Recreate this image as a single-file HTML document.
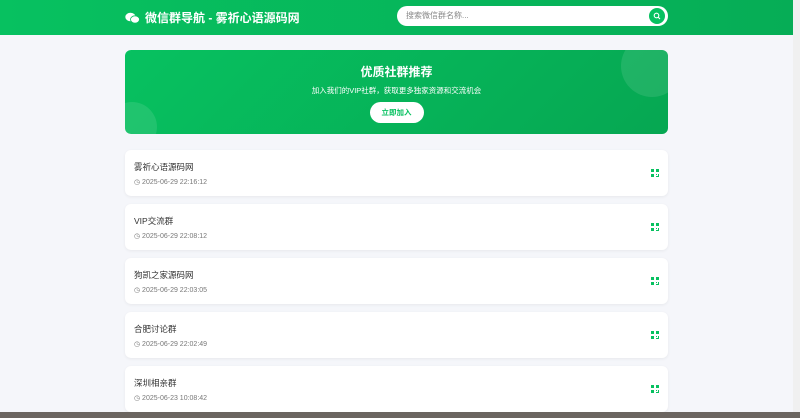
<!DOCTYPE html>
<html><head><meta charset="utf-8"><style>
*{margin:0;padding:0;box-sizing:border-box}
body{width:800px;height:418px;overflow:hidden;background:#f5f6fa;font-family:"Liberation Sans","Noto Sans CJK SC",sans-serif;position:relative}
.hd{position:absolute;left:0;top:0;width:793px;height:35px;background:linear-gradient(90deg,#07c160,#06ad56)}
.logo{position:absolute;left:125px;top:9px;color:#fff;font-size:12px;font-weight:bold;display:flex;align-items:center;gap:5px}
.search{position:absolute;left:397px;top:6px;width:271px;height:20px;background:#fff;border-radius:10px;font-size:8px;color:#888;padding-left:9px;line-height:20px}
.sbtn{position:absolute;right:3px;top:2px;width:16px;height:16px;border-radius:50%;background:#07c160}
.ban{position:absolute;left:125px;top:50px;width:543px;height:84px;border-radius:6px;background:linear-gradient(135deg,#07c160,#06a752);overflow:hidden;text-align:center;color:#fff}
.ban h2{font-size:12px;margin-top:13px}
.ban p{font-size:7.5px;margin-top:5px}
.btn{display:inline-block;margin-top:6px;background:#fff;color:#07c160;font-size:7.5px;font-weight:bold;width:54px;height:21px;line-height:21px;border-radius:11px}
.c1{position:absolute;right:-15px;top:-15px;width:62px;height:62px;border-radius:50%;background:rgba(255,255,255,.1)}
.c2{position:absolute;left:-18px;top:52px;width:50px;height:50px;border-radius:50%;background:rgba(255,255,255,.1)}
.card{position:absolute;left:125px;width:543px;height:46px;background:#fff;border-radius:6px;box-shadow:0 1px 3px rgba(0,0,0,.06)}
.t{position:absolute;left:9px;top:11px;font-size:8.5px;color:#333}
.d{position:absolute;left:9px;top:28px;font-size:7px;color:#777}
.q{position:absolute;right:9px;top:19px;width:8px;height:8px}
.sb{position:absolute;right:0;top:0;width:7px;height:412px;background:#f0f0f0}
.bot{position:absolute;left:0;top:412px;width:800px;height:6px;background:#6b6560}
</style></head><body>
<div class="hd">
<div class="logo"><svg width="15" height="12" viewBox="0 0 15 12"><ellipse cx="5.5" cy="5" rx="5.2" ry="4.3" fill="#fff"/><ellipse cx="10" cy="7.5" rx="4.5" ry="3.7" fill="#fff" stroke="#07c160" stroke-width=".8"/></svg>微信群导航 - 雾祈心语源码网</div>
<div class="search">搜索微信群名称...<div class="sbtn"><svg width="16" height="16"><circle cx="7.5" cy="7.5" r="2.3" stroke="#fff" fill="none" stroke-width="1.1"/><line x1="9.2" y1="9.2" x2="11" y2="11" stroke="#fff" stroke-width="1.1"/></svg></div></div>
</div>
<div class="ban"><div class="c1"></div><div class="c2"></div><h2>优质社群推荐</h2><p>加入我们的VIP社群，获取更多独家资源和交流机会</p><div class="btn">立即加入</div></div>
<div class="card" style="top:150px"><div class="t">雾祈心语源码网</div><div class="d">◷ 2025-06-29 22:16:12</div><svg class="q" viewBox="0 0 8 8"><path d="M0 0h3v3H0zM5 0h3v3H5zM0 5h3v3H0zM5 5h1v1H5zM7 5h1v3H5V7h2z" fill="#07c160"/></svg></div>
<div class="card" style="top:204px"><div class="t">VIP交流群</div><div class="d">◷ 2025-06-29 22:08:12</div><svg class="q" viewBox="0 0 8 8"><path d="M0 0h3v3H0zM5 0h3v3H5zM0 5h3v3H0zM5 5h1v1H5zM7 5h1v3H5V7h2z" fill="#07c160"/></svg></div>
<div class="card" style="top:258px"><div class="t">狗凯之家源码网</div><div class="d">◷ 2025-06-29 22:03:05</div><svg class="q" viewBox="0 0 8 8"><path d="M0 0h3v3H0zM5 0h3v3H5zM0 5h3v3H0zM5 5h1v1H5zM7 5h1v3H5V7h2z" fill="#07c160"/></svg></div>
<div class="card" style="top:312px"><div class="t">合肥讨论群</div><div class="d">◷ 2025-06-29 22:02:49</div><svg class="q" viewBox="0 0 8 8"><path d="M0 0h3v3H0zM5 0h3v3H5zM0 5h3v3H0zM5 5h1v1H5zM7 5h1v3H5V7h2z" fill="#07c160"/></svg></div>
<div class="card" style="top:366px"><div class="t">深圳相亲群</div><div class="d">◷ 2025-06-23 10:08:42</div><svg class="q" viewBox="0 0 8 8"><path d="M0 0h3v3H0zM5 0h3v3H5zM0 5h3v3H0zM5 5h1v1H5zM7 5h1v3H5V7h2z" fill="#07c160"/></svg></div>
<div class="sb"></div><div class="bot"></div>
</body></html>
